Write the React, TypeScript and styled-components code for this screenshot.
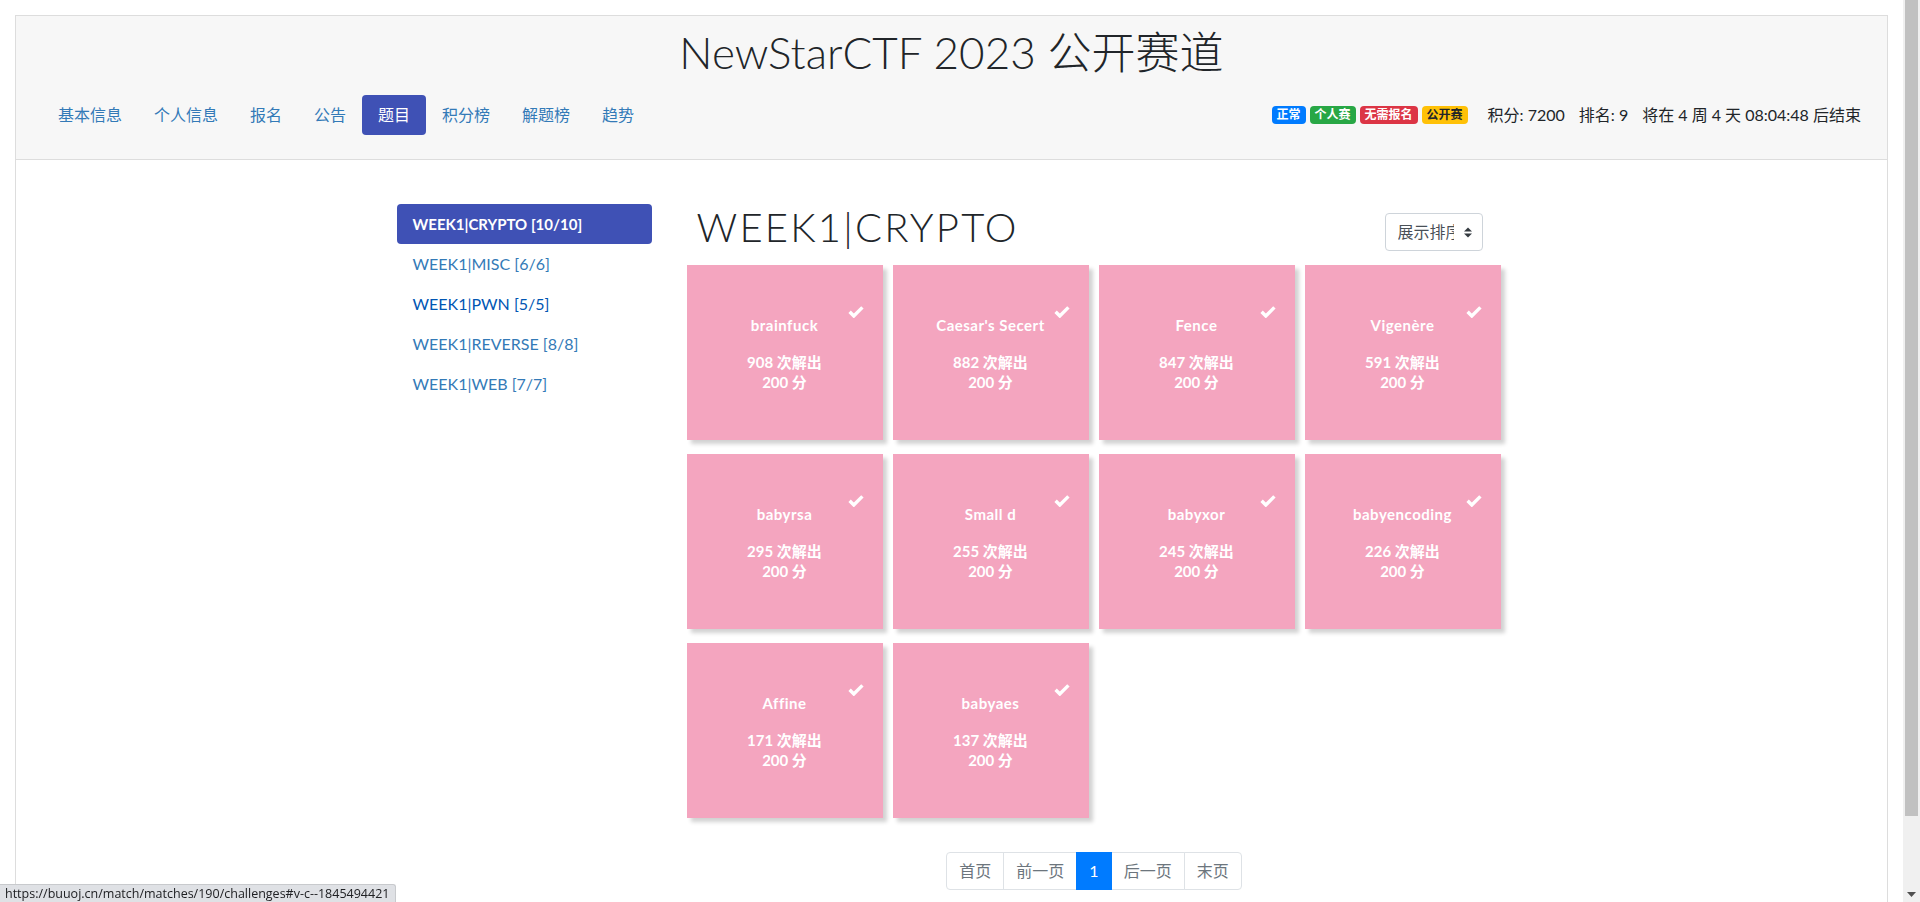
import React from 'react';
import styled, { createGlobalStyle } from 'styled-components';

const GlobalStyle = createGlobalStyle`
  html, body { margin: 0; padding: 0; height: 100%; overflow: hidden; }
  body {
    font-family: Lato, "Noto Sans CJK SC", sans-serif;
    color: #212529;
    background: #fff;
  }
  #root { height: 100%; }
  * { box-sizing: border-box; }
`;

const Shell = styled.div`
  display: flex;
  height: 100vh;
`;

const Viewport = styled.div`
  flex: 1;
  min-width: 0;
  height: 100%;
  padding: 15px 15px 0;
`;

const Frame = styled.div`
  height: 100%;
  border: 1px solid #ddd;
  border-bottom: none;
`;

const Header = styled.header`
  background: #f7f7f7;
  border-bottom: 1px solid #ddd;
  padding: 10px 26px 24px;
`;

const Title = styled.h1`
  margin: 0;
  text-align: center;
  font-family: Lato, "Noto Sans CJK SC", sans-serif;
  font-weight: 300;
  font-size: 44px;
  line-height: 53px;
  color: #212529;
`;

const NavRow = styled.div`
  display: flex;
  align-items: center;
  justify-content: space-between;
  margin-top: 16px;
`;

const Nav = styled.nav`
  display: flex;
`;

const NavLink = styled.a<{ $active?: boolean }>`
  display: block;
  padding: 8px 16px;
  font-size: 16px;
  line-height: 24px;
  border-radius: 4px;
  text-decoration: none;
  color: ${(p) => (p.$active ? '#fff' : '#337ab7')};
  background: ${(p) => (p.$active ? '#3f51b5' : 'transparent')};
`;

const Info = styled.div`
  display: flex;
  align-items: center;
  font-size: 16px;
  line-height: 24px;
  color: #212529;
`;

const Badges = styled.div`
  display: flex;
  gap: 4px;
  margin-right: 6px;
`;

const Badge = styled.span<{ $bg: string; $fg?: string }>`
  display: inline-block;
  font-size: 12px;
  font-weight: 700;
  line-height: 1;
  padding: 3px 5px;
  border-radius: 4px;
  background: ${(p) => p.$bg};
  color: ${(p) => p.$fg || '#fff'};
`;

const Stat = styled.span`
  margin-left: 14px;
`;

const Body = styled.div`
  width: 1140px;
  margin: 0 auto;
  padding: 42px 15px 0;
  display: grid;
  grid-template-columns: 255px 825px;
  column-gap: 30px;
  align-items: start;
`;

const Sidebar = styled.div`
  padding-top: 2px;
  display: flex;
  flex-direction: column;
`;

const SideItem = styled.a<{ $active?: boolean; $hover?: boolean }>`
  display: block;
  padding: 8px 16px;
  font-size: ${(p) => (p.$active ? '15px' : '16px')};
  line-height: 24px;
  border-radius: 4px;
  text-decoration: none;
  font-weight: ${(p) => (p.$active ? 700 : 400)};
  color: ${(p) => (p.$active ? '#fff' : p.$hover ? '#0056b3' : '#337ab7')};
  background: ${(p) => (p.$active ? '#3f51b5' : 'transparent')};
`;

const Main = styled.div`
  display: flex;
  flex-direction: column;
`;

const HeadingRow = styled.div`
  display: flex;
  align-items: flex-end;
  justify-content: space-between;
  height: 49px;
  padding: 0 24px 0 15px;
`;

const Heading = styled.h2`
  margin: 0;
  font-family: Lato, sans-serif;
  font-weight: 300;
  font-size: 40px;
  line-height: 48px;
  color: #212529;
  letter-spacing: 2.2px;
`;

const SortSelect = styled.div`
  display: flex;
  align-items: center;
  width: 98px;
  height: 38px;
  padding: 0 0 0 12px;
  border: 1px solid #ced4da;
  border-radius: 4px;
  background: #fff;
  font-size: 16px;
  color: #495057;
`;

const SortLabel = styled.span`
  width: 56px;
  overflow: hidden;
  white-space: nowrap;
  line-height: 24px;
`;

const SortIcon = styled.svg`
  margin-left: 10px;
`;

const Grid = styled.div`
  display: grid;
  grid-template-columns: repeat(4, 196px);
  gap: 14px 10px;
  margin: 14px 5px 0;
`;

const Card = styled.div`
  position: relative;
  height: 175px;
  padding-top: 50px;
  background: #f4a5bf;
  box-shadow: 4px 4px 4px rgba(0, 0, 0, 0.18);
  color: #fff;
  text-align: center;
  font-size: 15px;
  font-weight: 700;
  line-height: 20px;
`;

const CardTitle = styled.div`
  margin-bottom: 17px;
  letter-spacing: 0.5px;
`;

const Check = styled.svg`
  position: absolute;
  top: 41px;
  right: 19px;
`;

const Pager = styled.div`
  display: flex;
  justify-content: center;
  margin-top: 34px;
`;

const PageItem = styled.span<{ $active?: boolean }>`
  display: block;
  padding: 8px 12px;
  margin-left: -1px;
  font-size: 16px;
  line-height: 20px;
  border: 1px solid ${(p) => (p.$active ? '#007bff' : '#dee2e6')};
  background: ${(p) => (p.$active ? '#007bff' : '#fff')};
  color: ${(p) => (p.$active ? '#fff' : '#6c757d')};
  position: relative;
  z-index: ${(p) => (p.$active ? 1 : 0)};
  &:first-child { margin-left: 0; border-radius: 4px 0 0 4px; }
  &:last-child { border-radius: 0 4px 4px 0; }
`;

const StatusBubble = styled.div`
  position: fixed;
  left: 0;
  bottom: 0;
  height: 18px;
  padding: 0 6px 0 5px;
  background: #dfe1e5;
  border-top: 1px solid #c8cacd;
  border-right: 1px solid #c8cacd;
  border-top-right-radius: 3px;
  font-family: "Open Sans", "Noto Sans", sans-serif;
  font-size: 12.5px;
  line-height: 17px;
  color: #202124;
  white-space: nowrap;
`;

const ScrollBar = styled.div`
  width: 17px;
  height: 100vh;
  background: #f0f0f0;
  display: flex;
  flex-direction: column;
  align-items: center;
`;

const ScrollThumb = styled.div`
  width: 13px;
  height: 816px;
  background: #c1c1c1;
`;

const ScrollArrow = styled.svg`
  margin-top: auto;
  margin-bottom: 5px;
`;

const challenges = [
  { name: 'brainfuck', solves: 908 },
  { name: "Caesar's Secert", solves: 882 },
  { name: 'Fence', solves: 847 },
  { name: 'Vigenère', solves: 591 },
  { name: 'babyrsa', solves: 295 },
  { name: 'Small d', solves: 255 },
  { name: 'babyxor', solves: 245 },
  { name: 'babyencoding', solves: 226 },
  { name: 'Affine', solves: 171 },
  { name: 'babyaes', solves: 137 },
];

const navItems = ['基本信息', '个人信息', '报名', '公告', '题目', '积分榜', '解题榜', '趋势'];

const categories = [
  { label: 'WEEK1|CRYPTO [10/10]', active: true },
  { label: 'WEEK1|MISC [6/6]' },
  { label: 'WEEK1|PWN [5/5]', hover: true },
  { label: 'WEEK1|REVERSE [8/8]' },
  { label: 'WEEK1|WEB [7/7]' },
];

const CheckIcon = () => (
  <Check width="16" height="12" viewBox="0 0 16 12">
    <path d="M1.6 5.8 L5.8 10 L14.4 1.4" stroke="#fff" strokeWidth="3.4" fill="none" strokeLinejoin="miter" />
  </Check>
);

export default function App() {
  return (
    <>
      <GlobalStyle />
      <Shell>
        <Viewport>
          <Frame>
            <Header>
              <Title>NewStarCTF 2023 公开赛道</Title>
              <NavRow>
                <Nav>
                  {navItems.map((n) => (
                    <NavLink key={n} href="#" $active={n === '题目'}>
                      {n}
                    </NavLink>
                  ))}
                </Nav>
                <Info>
                  <Badges>
                    <Badge $bg="#007bff">正常</Badge>
                    <Badge $bg="#28a745">个人赛</Badge>
                    <Badge $bg="#dc3545">无需报名</Badge>
                    <Badge $bg="#ffc107" $fg="#212529">公开赛</Badge>
                  </Badges>
                  <Stat>积分: 7200</Stat>
                  <Stat>排名: 9</Stat>
                  <Stat>将在 4 周 4 天 08:04:48 后结束</Stat>
                </Info>
              </NavRow>
            </Header>
            <Body>
              <Sidebar>
                {categories.map((c) => (
                  <SideItem key={c.label} href="#" $active={c.active} $hover={c.hover}>
                    {c.label}
                  </SideItem>
                ))}
              </Sidebar>
              <Main>
                <HeadingRow>
                  <Heading>WEEK1|CRYPTO</Heading>
                  <SortSelect>
                    <SortLabel>展示排序</SortLabel>
                    <SortIcon width="8" height="11" viewBox="0 0 8 11">
                      <path d="M0 4.5 L4 0.5 L8 4.5 Z M0 6.5 L4 10.5 L8 6.5 Z" fill="#343a40" />
                    </SortIcon>
                  </SortSelect>
                </HeadingRow>
                <Grid>
                  {challenges.map((c) => (
                    <Card key={c.name}>
                      <CheckIcon />
                      <CardTitle>{c.name}</CardTitle>
                      <div>{c.solves} 次解出</div>
                      <div>200 分</div>
                    </Card>
                  ))}
                </Grid>
                <Pager>
                  <PageItem>首页</PageItem>
                  <PageItem>前一页</PageItem>
                  <PageItem $active>1</PageItem>
                  <PageItem>后一页</PageItem>
                  <PageItem>末页</PageItem>
                </Pager>
              </Main>
            </Body>
          </Frame>
        </Viewport>
        <ScrollBar>
          <ScrollThumb />
          <ScrollArrow width="9" height="5" viewBox="0 0 9 5">
            <path d="M0 0 L9 0 L4.5 5 Z" fill="#505050" />
          </ScrollArrow>
        </ScrollBar>
      </Shell>
      <StatusBubble>https://buuoj.cn/match/matches/190/challenges#v-c--1845494421</StatusBubble>
    </>
  );
}
